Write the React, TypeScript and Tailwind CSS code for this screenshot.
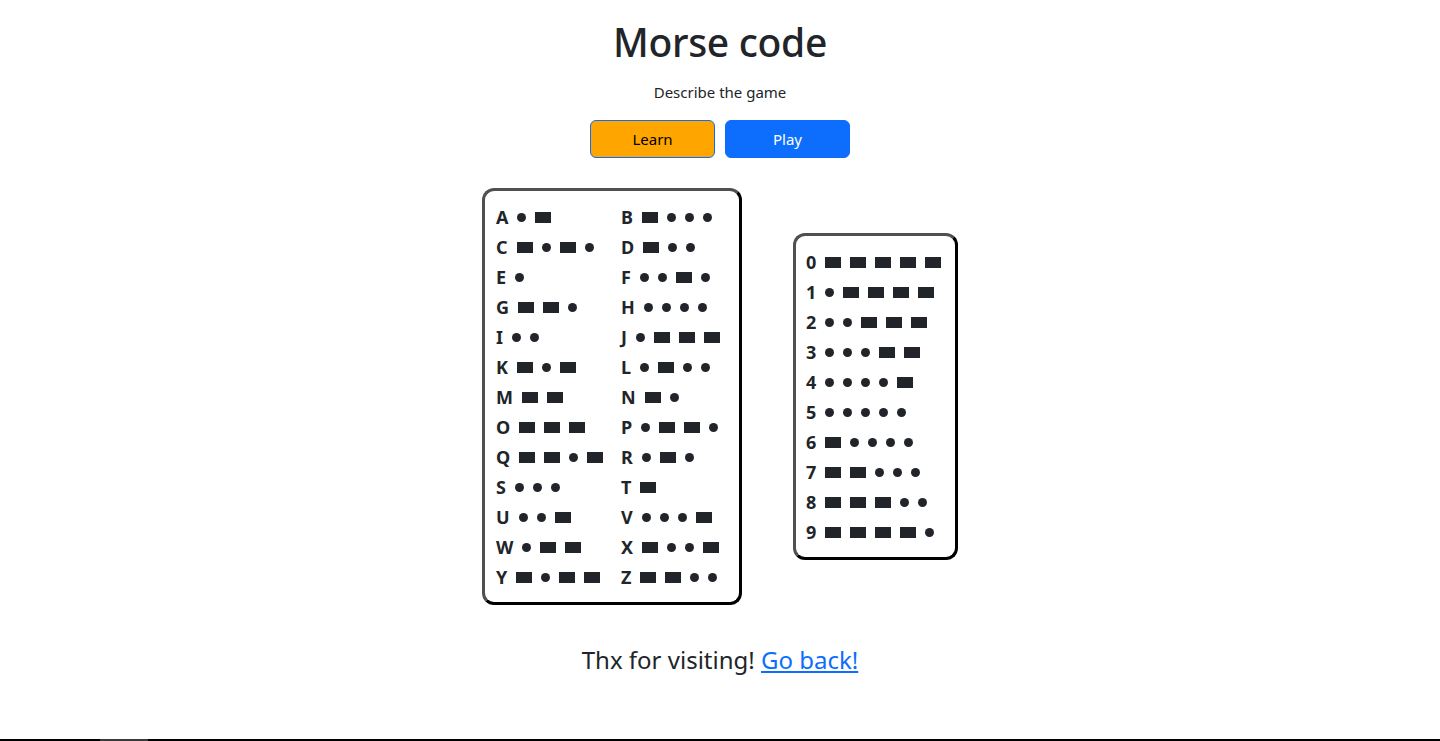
import React from "react";

const letters: [string, string][] = [
  ["A", ".-"], ["B", "-..."], ["C", "-.-."], ["D", "-.."], ["E", "."], ["F", "..-."],
  ["G", "--."], ["H", "...."], ["I", ".."], ["J", ".---"], ["K", "-.-"], ["L", ".-.."],
  ["M", "--"], ["N", "-."], ["O", "---"], ["P", ".--."], ["Q", "--.-"], ["R", ".-."],
  ["S", "..."], ["T", "-"], ["U", "..-"], ["V", "...-"], ["W", ".--"], ["X", "-..-"],
  ["Y", "-.--"], ["Z", "--.."],
];

const digits: [string, string][] = [
  ["0", "-----"], ["1", ".----"], ["2", "..---"], ["3", "...--"], ["4", "....-"],
  ["5", "....."], ["6", "-...."], ["7", "--..."], ["8", "---.."], ["9", "----."],
];

function Row({ ch, code }: { ch: string; code: string }) {
  return (
    <div className="flex h-[30px] items-center gap-[9px]">
      <span className="text-[18px] font-bold leading-none text-[#212529]">{ch}</span>
      {code.split("").map((c, i) =>
        c === "." ? (
          <span key={i} className="mt-[1px] block h-[9px] w-[9px] rounded-full bg-[#212529]" />
        ) : (
          <span key={i} className="mt-[1px] block h-[11px] w-[16px] bg-[#212529]" />
        )
      )}
    </div>
  );
}

export default function App() {
  return (
    <div
      className="flex min-h-[741px] flex-col bg-white text-[#212529]"
      style={{ fontFamily: '"Noto Sans", "Open Sans", Arial, sans-serif' }}
    >
      <div className="flex flex-1 flex-col items-center">
        <h1 className="mt-[18px] text-[39px] font-medium leading-[48px] tracking-[-0.3px]">Morse code</h1>
        <p className="mt-[14px] text-[15px] leading-[24px]">Describe the game</p>
        <div className="mt-[16px] flex gap-[10px]">
          <button className="h-[38px] w-[125px] rounded-[6px] border border-[#0d6efd] bg-[#ffa500] text-[15px] text-black">
            Learn
          </button>
          <button className="h-[38px] w-[125px] rounded-[6px] border border-[#0d6efd] bg-[#0d6efd] text-[15px] text-white">
            Play
          </button>
        </div>
        <div className="mt-[30px] flex items-center gap-[51px]">
          <div className="w-[260px] rounded-[12px] border-[3px] border-t-[#505050] border-l-[#505050] border-b-black border-r-black pl-[11px] pt-[11px] pb-[10px]">
            <div className="grid grid-cols-[125px_auto]">
              {letters.map(([ch, code]) => (
                <Row key={ch} ch={ch} code={code} />
              ))}
            </div>
          </div>
          <div className="w-[165px] rounded-[12px] border-[3px] border-t-[#505050] border-l-[#505050] border-b-black border-r-black pl-[10px] pt-[11px] pb-[10px]">
            {digits.map(([ch, code]) => (
              <Row key={ch} ch={ch} code={code} />
            ))}
          </div>
        </div>
        <p className="mt-[39px] text-[24px] leading-[32px]">
          Thx for visiting!{" "}
          <a href="#" className="text-[#0d6efd] underline">
            Go back!
          </a>
        </p>
      </div>
      <div className="relative h-[2px] w-full bg-black">
        <div className="absolute left-[100px] top-0 h-[2px] w-[48px] bg-[#3a3a3a]" />
      </div>
    </div>
  );
}
